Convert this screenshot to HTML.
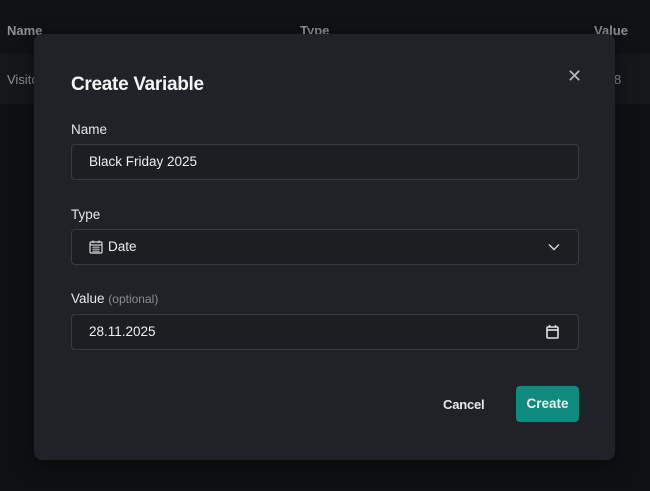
<!DOCTYPE html>
<html><head><style>
*{box-sizing:border-box;margin:0;padding:0}
body{width:650px;height:491px;background:#0f1012;font-family:"Liberation Sans",sans-serif;position:relative;overflow:hidden;color:#e8e9eb}
.hdr{position:absolute;top:0;left:0;width:650px;height:54px;background:#111214}
.row{position:absolute;top:54px;left:0;width:650px;height:50px;background:#16171a}
.t{position:absolute;font-size:13px;color:#8d9096;font-weight:bold}
.modal{position:absolute;left:34px;top:34px;width:581px;height:426px;background:#202227;border-radius:8px;box-shadow:0 4px 20px rgba(0,0,0,.5)}
.title{position:absolute;left:37px;top:40px;font-size:19px;font-weight:bold;color:#f3f4f6;letter-spacing:-0.3px}
.x{position:absolute;left:533px;top:32px;font-size:18px;color:#b5b8bd}
.lbl{position:absolute;left:37px;font-size:13.5px;color:#e6e7e9}
.lbl span{color:#8a8d93;font-size:12px}
.inp{position:absolute;left:37px;width:508px;height:36px;background:#1c1e22;border:1px solid #383b41;border-radius:4px;font-size:13.5px;color:#eceef0;padding-left:17px;line-height:34px}
.cancel{position:absolute;left:409px;top:363px;font-size:13px;font-weight:bold;color:#e6e7e9;letter-spacing:-0.2px}
.create{position:absolute;left:482px;top:352px;width:63px;height:36px;background:#0f8a7e;border-radius:4px;color:#e8f5f3;font-size:13.5px;font-weight:bold;text-align:center;line-height:36px}
</style></head><body>
<div class="hdr"></div><div class="row"></div>
<div class="t" style="left:7px;top:23px">Name</div>
<div class="t" style="left:300px;top:23px">Type</div>
<div class="t" style="left:594px;top:23px">Value</div>
<div class="t" style="left:7px;top:72px;font-weight:normal">Visitors</div>
<div class="t" style="left:614px;top:72px;font-weight:normal">8</div>
<div class="modal">
<div class="title">Create Variable</div>
<div class="x">✕</div>
<div class="lbl" style="top:88px">Name</div>
<div class="inp" style="top:110px">Black Friday 2025</div>
<div class="lbl" style="top:173px">Type</div>
<div class="inp" style="top:195px;padding-left:36px">Date
<svg style="position:absolute;left:17px;top:10px" width="14" height="14" viewBox="0 0 14 14" fill="none" stroke="#d8dadd" stroke-width="1.2"><rect x="1" y="2" width="12" height="11" rx="1"/><line x1="1" y1="5" x2="13" y2="5"/><line x1="4" y1="0.5" x2="4" y2="3"/><line x1="10" y1="0.5" x2="10" y2="3"/><path d="M3 7.5h8M3 9.5h8M3 11.5h8M5 6v6.5M7 6v6.5M9 6v6.5" stroke-width="0.6"/></svg>
<svg style="position:absolute;left:476px;top:13px" width="12" height="8" viewBox="0 0 12 8" fill="none" stroke="#d8dadd" stroke-width="1.4"><path d="M1 1.5l5 5 5-5"/></svg>
</div>
<div class="lbl" style="top:257px">Value <span>(optional)</span></div>
<div class="inp" style="top:280px">28.11.2025
<svg style="position:absolute;left:474px;top:10px" width="13" height="14" viewBox="0 0 13 14" fill="none" stroke="#e0e2e5" stroke-width="1.6"><rect x="1" y="2" width="11" height="11" rx="1"/><line x1="1" y1="5" x2="12" y2="5"/><line x1="3.5" y1="0" x2="3.5" y2="2"/><line x1="9.5" y1="0" x2="9.5" y2="2"/></svg>
</div>
<div class="cancel">Cancel</div>
<div class="create">Create</div>
</div>
</body></html>
